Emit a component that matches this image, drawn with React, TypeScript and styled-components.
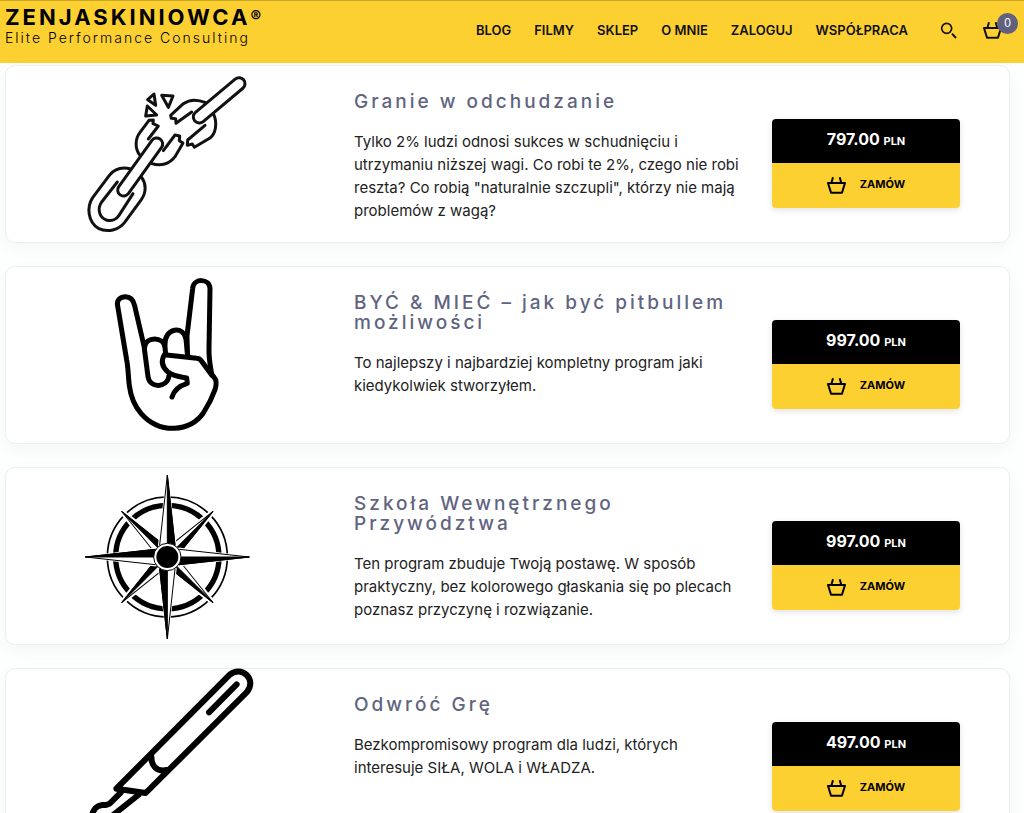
import React from "react";
import styled, { createGlobalStyle } from "styled-components";

const GlobalStyle = createGlobalStyle`
  * { box-sizing: border-box; }
  body {
    margin: 0;
    background: #fdfefe;
    color: #222;
    font-family: Inter, "Noto Sans", sans-serif;
    font-size: 15px;
    line-height: 23px;
  }
`;

const Header = styled.header`
  display: flex;
  align-items: flex-start;
  justify-content: space-between;
  height: 63px;
  padding: 5px 6px 0 5px;
  border-top: 1px solid #c9a52a;
  background: #fdd032;
`;

const Brand = styled.a`
  display: flex;
  flex-direction: column;
  color: #000;
  text-decoration: none;
  white-space: nowrap;
`;

const BrandName = styled.span`
  font-size: 22px;
  font-weight: 700;
  line-height: 22px;
  letter-spacing: 3px;
`;

const Registered = styled.sup`
  font-size: 16px;
  line-height: 1px;
  letter-spacing: 0;
  vertical-align: 3px;
`;

const Tagline = styled.span`
  font-size: 14px;
  font-weight: 300;
  line-height: 20px;
  letter-spacing: 2px;
`;

const Nav = styled.nav`
  display: flex;
  align-items: center;
  gap: 23px;
  padding-top: 12px;
`;

const NavLink = styled.a`
  color: #111;
  font-size: 13px;
  font-weight: 600;
  line-height: 24px;
  text-decoration: none;
  white-space: nowrap;
`;

const IconButton = styled.button`
  display: flex;
  position: relative;
  margin: 0;
  padding: 0;
  border: 0;
  background: none;
  color: #111;
  cursor: pointer;
`;

const Tools = styled.div`
  display: flex;
  align-items: center;
  gap: 26px;
  padding: 0 16px 0 9px;
`;

const Badge = styled.span`
  position: absolute;
  top: -9px;
  right: -16px;
  width: 21px;
  height: 21px;
  border-radius: 50%;
  background: #61607f;
  color: #fff;
  font-size: 12px;
  line-height: 21px;
  text-align: center;
`;

const List = styled.main`
  display: flex;
  flex-direction: column;
  gap: 23px;
  padding: 2px 14px 24px 5px;
`;

const Card = styled.article`
  display: grid;
  grid-template-columns: minmax(190px, 324fr) minmax(0, 394fr) 188px;
  column-gap: 24px;
  min-height: 178px;
  padding-right: 49px;
  border: 1px solid #e9f0f1;
  border-radius: 10px;
  background: #fff;
  box-shadow: 0 5px 15px rgba(0, 0, 0, 0.04);
`;

const Picture = styled.div`
  display: flex;
  justify-content: center;
  padding-left: 4px;
  svg { display: block; }
`;

const Info = styled.div`
  padding: 26px 8px 16px 0;
`;

const Title = styled.h2`
  margin: 0 0 18px;
  color: #61647f;
  font-size: 19px;
  font-weight: 500;
  line-height: 20px;
  letter-spacing: 3px;
`;

const Text = styled.p`
  margin: 0;
`;

const Offer = styled.div`
  align-self: start;
  margin-top: 53px;
  border-radius: 4px;
  overflow: hidden;
  box-shadow: 0 2px 6px rgba(0, 0, 0, 0.12);
`;

const Price = styled.div`
  height: 44px;
  background: #000;
  color: #fff;
  font-size: 16px;
  font-weight: 700;
  line-height: 40px;
  text-align: center;
`;

const Currency = styled.span`
  font-size: 11px;
`;

const Order = styled.button`
  display: flex;
  align-items: center;
  justify-content: center;
  gap: 14px;
  width: 100%;
  height: 45px;
  margin: 0;
  padding: 0;
  border: 0;
  background: #fdd032;
  color: #000;
  font-family: inherit;
  font-size: 11px;
  font-weight: 700;
  line-height: 40px;
  cursor: pointer;
`;

const OrderLabel = styled.span`
  padding-bottom: 3px;
`;

const Basket = () => (
  <svg width="19" height="17" viewBox="0 0 57 51" fill="none" stroke="currentColor" strokeWidth="6" strokeLinejoin="round" aria-hidden="true">
    <path d="M3 18H54L45 47H12Z M18 1L13 18 M38 1L43 18" />
  </svg>
);

const Search = () => (
  <svg width="17" height="17" viewBox="0 0 51 51" fill="none" stroke="currentColor" strokeWidth="5" aria-hidden="true">
    <circle cx="20" cy="19" r="15" />
    <path d="M36 35L48 48" strokeWidth="6" />
  </svg>
);

const Chain = () => (
  <svg width="190" height="176" viewBox="0 0 570 528" fill="none" stroke="#111" strokeWidth="9" strokeLinecap="round" strokeLinejoin="round" aria-hidden="true">
    <path d="M165 308C141 303 118 309 103 328L53 395C34 424 39 468 70 487C98 501 131 492 149 469L199 401C215 378 213 352 200 334" />
    <path d="M127 348L80 408C65 430 74 455 94 462C111 467 125 459 132 448L174 383" />
    <path d="M195 268C178 247 181 217 195 199L222 163L235 162L234 173L250 180L220 219" />
    <path d="M229 292C257 302 284 294 300 272L324 231L313 224L314 210L300 207L265 254" />
    <path d="M392 110C366 99 341 102 325 113L287 148L289 157L302 158L303 172L350 138" />
    <path d="M415 143C429 172 421 204 405 216L358 244L352 234L337 238L338 222L390 178" />
    <path d="M237 84L218 101L242 118ZM260 88L294 90L280 124ZM217 120L245 147L212 150Z" />
    <path d="M245 234L146 372M492 53L373 153" strokeWidth="45" />
    <path d="M245 234L146 372M492 53L373 153" stroke="#fff" strokeWidth="27" />
  </svg>
);

const Hand = () => (
  <svg width="190" height="176" viewBox="0 6 570 528" fill="none" stroke="#000" strokeWidth="15" strokeLinecap="round" strokeLinejoin="round" aria-hidden="true">
    <path d="M410 328L418 338C426 347 425 358 420 374C413 394 400 421 385 444C364 474 334 488 298 490C257 491 223 474 198 445C176 420 167 394 163 362C159 330 160 309 155 285L128 123C123 104 138 95 151 95C168 95 176 108 179 122L207 243L219 335C224 370 277 371 282 332" />
    <path d="M209 247C211 214 266 213 270 247L272 268" />
    <path d="M270 240C267 188 327 180 333 223L338 270" />
    <path d="M337 265L336 212L353 70C356 39 404 39 405 71L402 250C401 280 406 302 410 328" />
    <path d="M410 330L381 290Q374 280 365 280L268 269C257 289 262 307 279 321C297 335 317 335 335 339L337 355C314 362 297 375 291 396" />
  </svg>
);

const Compass = () => (
  <svg width="190" height="176" viewBox="0 9 570 528" fill="none" stroke="#000" aria-hidden="true">
    <circle cx="277" cy="276" r="180" strokeWidth="5" />
    <circle cx="277" cy="276" r="155" strokeWidth="16" />
    <circle cx="277" cy="276" r="54" strokeWidth="2" fill="#fff" />
    {[45, 135, 225, 315].map((angle) => (
      <g key={angle} transform={`rotate(${angle} 277 276)`}>
        <path d="M277 82L259 228L277 276L295 228Z" fill="#fff" stroke="#fff" strokeWidth="14" />
        <path d="M277 82L261 228L277 276L293 228Z" fill="#fff" strokeWidth="3" />
        <path d="M277 82V276L293 228Z" fill="#000" strokeWidth="3" />
      </g>
    ))}
    {[0, 90, 180, 270].map((angle) => (
      <g key={angle} transform={`rotate(${angle} 277 276)`}>
        <path d="M277 58L255 240L277 276L299 240Z" fill="#fff" stroke="#fff" strokeWidth="12" />
        <path d="M277 30L254 240L277 276L300 240Z" fill="#fff" strokeWidth="3" />
        <path d="M277 30V276L300 240Z" fill="#000" strokeWidth="3" />
      </g>
    ))}
    <circle cx="277" cy="276" r="41" strokeWidth="3" fill="#fff" />
    <circle cx="277" cy="276" r="33" fill="#000" stroke="none" />
  </svg>
);

const Scalpel = () => (
  <svg width="190" height="176" viewBox="0 27 570 528" overflow="visible" fill="none" stroke="#000" strokeWidth="18" strokeLinecap="round" strokeLinejoin="round" aria-hidden="true">
    <path d="M124 386L462 46C499 13 549 59 514 98L212 399Z" />
    <path d="M485 73L402 157M229 290C229 319 246 336 275 330" />
    <path d="M137 398L106 429C98 437 92 434 82 435C63 437 55 448 50 468L20 540L190 405" />
  </svg>
);

const links = ["BLOG", "FILMY", "SKLEP", "O MNIE", "ZALOGUJ", "WSPÓŁPRACA"];

const products = [
  {
    title: "Granie w odchudzanie",
    text: "Tylko 2% ludzi odnosi sukces w schudnięciu i utrzymaniu niższej wagi. Co robi te 2%, czego nie robi reszta? Co robią \"naturalnie szczupli\", którzy nie mają problemów z wagą?",
    price: "797.00",
    Art: Chain,
  },
  {
    title: "BYĆ & MIEĆ – jak być pitbullem możliwości",
    text: "To najlepszy i najbardziej kompletny program jaki kiedykolwiek stworzyłem.",
    price: "997.00",
    Art: Hand,
  },
  {
    title: "Szkoła Wewnętrznego Przywództwa",
    text: "Ten program zbuduje Twoją postawę. W sposób praktyczny, bez kolorowego głaskania się po plecach poznasz przyczynę i rozwiązanie.",
    price: "997.00",
    Art: Compass,
  },
  {
    title: "Odwróć Grę",
    text: "Bezkompromisowy program dla ludzi, których interesuje SIŁA, WOLA i WŁADZA.",
    price: "497.00",
    Art: Scalpel,
  },
];

export default function App() {
  return (
    <>
      <GlobalStyle />
      <Header>
        <Brand href="#">
          <BrandName>ZENJASKINIOWCA<Registered>®</Registered></BrandName>
          <Tagline>Elite Performance Consulting</Tagline>
        </Brand>
        <Nav>
          {links.map((label) => (
            <NavLink href="#" key={label}>{label}</NavLink>
          ))}
          <Tools>
            <IconButton type="button" aria-label="Szukaj"><Search /></IconButton>
            <IconButton type="button" aria-label="Koszyk"><Basket /><Badge>0</Badge></IconButton>
          </Tools>
        </Nav>
      </Header>
      <List>
        {products.map(({ title, text, price, Art }) => (
          <Card key={title}>
            <Picture><Art /></Picture>
            <Info>
              <Title>{title}</Title>
              <Text>{text}</Text>
            </Info>
            <Offer>
              <Price>{price} <Currency>PLN</Currency></Price>
              <Order type="button"><Basket /><OrderLabel>ZAMÓW</OrderLabel></Order>
            </Offer>
          </Card>
        ))}
      </List>
    </>
  );
}
